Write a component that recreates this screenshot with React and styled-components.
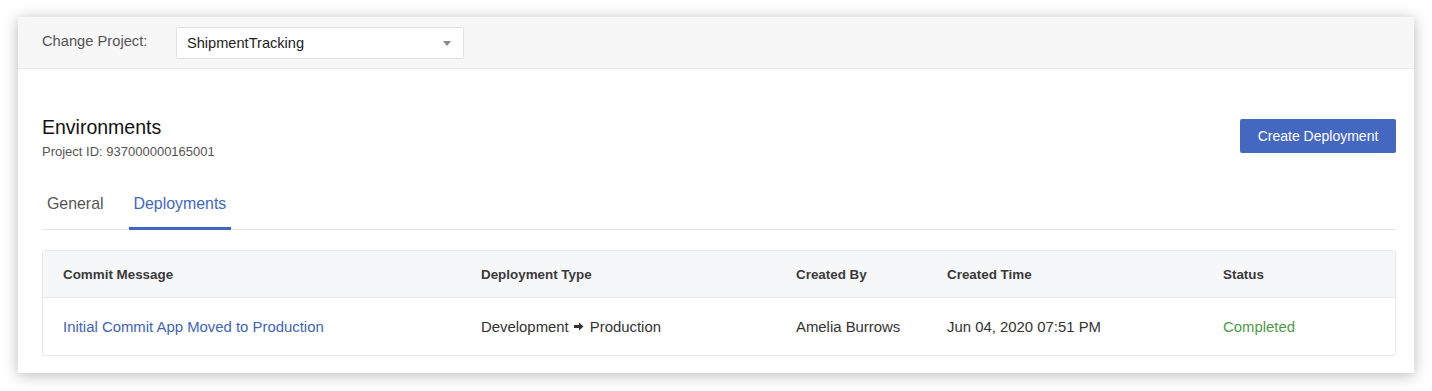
import React, { useState } from 'react'
import styled, { createGlobalStyle } from 'styled-components'

const GlobalStyle = createGlobalStyle`
  html, body {
    margin: 0;
    padding: 0;
    background: #ffffff;
    font-family: "Liberation Sans", Arial, sans-serif;
    -webkit-font-smoothing: antialiased;
  }
`

const deployments = [
  {
    message: 'Initial Commit App Moved to Production',
    from: 'Development',
    to: 'Production',
    createdBy: 'Amelia Burrows',
    createdTime: 'Jun 04, 2020 07:51 PM',
    status: 'Completed',
  },
]

const columns = '418px 315px 151px 276px 1fr'

const Arrow = () => (
  <svg width="10" height="9" viewBox="0 0 10 9" style={{ margin: '0 6px 0 5px' }}>
    <path d="M0 3h5V0.5L9.5 4.5 5 8.5V6H0z" fill="#333" />
  </svg>
)

const App = () => {
  const [tab, setTab] = useState('deployments')

  return (
    <>
      <GlobalStyle />
      <Page>
        <Panel>
          <TopBar>
            <Label>Change Project:</Label>
            <Select>
              <span>ShipmentTracking</span>
              <Caret />
            </Select>
          </TopBar>
          <Body>
            <Heading>
              <div>
                <Title>Environments</Title>
                <SubTitle>Project ID: 937000000165001</SubTitle>
              </div>
              <PrimaryButton>Create Deployment</PrimaryButton>
            </Heading>
            <Tabs>
              <Tab active={tab === 'general'} onClick={() => setTab('general')}>General</Tab>
              <Tab active={tab === 'deployments'} onClick={() => setTab('deployments')}>Deployments</Tab>
            </Tabs>
            <Table>
              <HeadRow>
                <HeadCell>Commit Message</HeadCell>
                <HeadCell>Deployment Type</HeadCell>
                <HeadCell>Created By</HeadCell>
                <HeadCell>Created Time</HeadCell>
                <HeadCell>Status</HeadCell>
              </HeadRow>
              {deployments.map((d, i) => (
                <Row key={i}>
                  <Cell><Link>{d.message}</Link></Cell>
                  <Cell>{d.from}<Arrow />{d.to}</Cell>
                  <Cell>{d.createdBy}</Cell>
                  <Cell>{d.createdTime}</Cell>
                  <Cell><Status>{d.status}</Status></Cell>
                </Row>
              ))}
            </Table>
          </Body>
        </Panel>
      </Page>
    </>
  )
}

export default App

const Page = styled.div`
  padding: 17px 18px 18px 18px;
`

const Panel = styled.div`
  background: #fff;
  box-shadow: 0 2px 14px rgba(0, 0, 0, 0.28);
  height: 356px;
  box-sizing: border-box;
`

const TopBar = styled.div`
  display: flex;
  align-items: center;
  height: 52px;
  box-sizing: border-box;
  background: #f7f7f7;
  border-bottom: 1px solid #e8e8e8;
  padding: 0 0 0 24px;
`

const Label = styled.span`
  font-size: 14.7px;
  color: #555;
  width: 134px;
  margin-top: -3px;
`

const Select = styled.div`
  display: flex;
  align-items: center;
  justify-content: space-between;
  width: 288px;
  height: 32px;
  box-sizing: border-box;
  background: #fff;
  border: 1px solid #e2e2e2;
  border-radius: 2px;
  padding: 0 12px 0 10px;
  font-size: 14.6px;
  color: #222;
`

const Caret = styled.span`
  width: 0;
  height: 0;
  border-left: 4px solid transparent;
  border-right: 4px solid transparent;
  border-top: 5px solid #888;
  margin-top: 2px;
`

const Body = styled.div`
  padding: 46px 18px 0 24px;
`

const Heading = styled.div`
  display: flex;
  justify-content: space-between;
  align-items: flex-start;
`

const Title = styled.div`
  font-size: 19.5px;
  color: #111;
  line-height: 24px;
`

const SubTitle = styled.div`
  font-size: 13px;
  color: #555;
  margin-top: 5px;
`

const PrimaryButton = styled.button`
  background: #4468c2;
  color: #fff;
  border: none;
  border-radius: 2px;
  height: 34px;
  width: 156px;
  font-family: inherit;
  font-size: 14px;
  margin-top: 4px;
  cursor: pointer;
`

const Tabs = styled.div`
  display: flex;
  margin-top: 27px;
  border-bottom: 1px solid #e4e4e4;
`

const Tab = styled.div`
  font-size: 15.9px;
  line-height: 19px;
  padding: 8px 5px 14px 5px;
  margin-right: 20px;
  color: ${(p) => (p.active ? '#4466c2' : '#555')};
  border-bottom: 3px solid ${(p) => (p.active ? '#4466c2' : 'transparent')};
  margin-bottom: -1px;
  cursor: pointer;
`

const Table = styled.div`
  margin-top: 20px;
  border: 1px solid #e6e8ec;
  border-radius: 3px;
  overflow: hidden;
`

const HeadRow = styled.div`
  display: grid;
  grid-template-columns: ${columns};
  align-items: center;
  height: 46px;
  padding-left: 20px;
  background: #f6f7f9;
  border-bottom: 1px solid #e6e8ec;
`

const HeadCell = styled.div`
  font-size: 13.4px;
  font-weight: bold;
  color: #3a3a3a;
`

const Row = styled.div`
  display: grid;
  grid-template-columns: ${columns};
  align-items: center;
  height: 57px;
  padding-left: 20px;
`

const Cell = styled.div`
  display: flex;
  align-items: center;
  font-size: 14.9px;
  color: #333;
`

const Link = styled.span`
  color: #3e63c0;
`

const Status = styled.span`
  color: #4e9a4c;
`
